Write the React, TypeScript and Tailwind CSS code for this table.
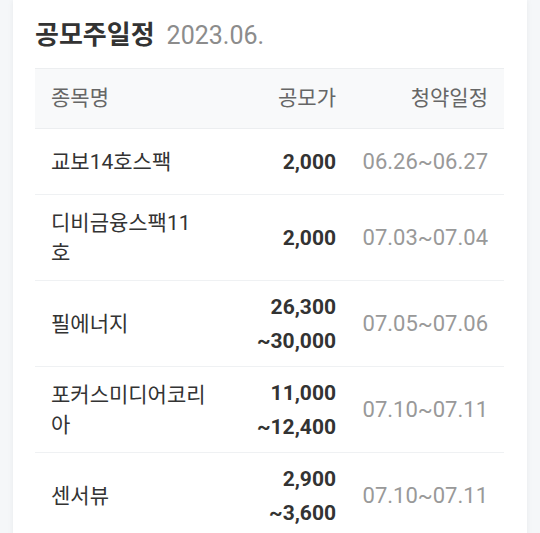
import React from "react";

type Row = { name: React.ReactNode; price: React.ReactNode; date: string; two: boolean };

const rows: Row[] = [
  { name: "교보14호스팩", price: "2,000", date: "06.26~06.27", two: false },
  { name: <>디비금융스팩11<br />호</>, price: "2,000", date: "07.03~07.04", two: true },
  { name: "필에너지", price: <>26,300<br />~30,000</>, date: "07.05~07.06", two: true },
  { name: <>포커스미디어코리<br />아</>, price: <>11,000<br />~12,400</>, date: "07.10~07.11", two: true },
  { name: "센서뷰", price: <>2,900<br />~3,600</>, date: "07.10~07.11", two: true },
];

export default function App() {
  return (
    <div
      className="min-h-[533px] w-[540px] bg-[#f5f7f9] overflow-hidden"
      style={{ fontFamily: 'Roboto, "Noto Sans CJK KR", sans-serif' }}
    >
      <div className="ml-[13px] w-[514px] min-h-[533px] bg-white shadow-[0_0_6px_rgba(0,0,0,0.06)] px-[22px] pt-[16px]">
        <div className="flex items-baseline h-[38px] leading-[38px]">
          <span className="text-[26px] font-bold text-[#333333]">공모주일정</span>
          <span className="ml-[12px] text-[25px] text-[#8c8c8c]">2023.06.</span>
        </div>
        <div className="mt-[14px] w-[469px]">
          <div className="grid grid-cols-[193px_124px_152px] h-[61px] items-center bg-[#f8f9fa] border-t border-b border-[#eceef0] text-[21px] text-[#666666]">
            <div className="pl-[16px]">종목명</div>
            <div className="pr-[16px] text-right">공모가</div>
            <div className="pr-[16px] text-right">청약일정</div>
          </div>
          {rows.map((r, i) => (
            <div
              key={i}
              className={`grid grid-cols-[193px_124px_152px] items-center border-b border-[#eff1f3] ${r.two ? "h-[86px]" : "h-[66px]"}`}
            >
              <div className="pl-[16px] text-[21px] leading-[30px] text-[#333333] whitespace-nowrap">{r.name}</div>
              <div className="pr-[16px] text-right text-[21px] leading-[34px] font-bold text-[#333333] whitespace-nowrap">{r.price}</div>
              <div className="pr-[16px] text-right text-[22px] leading-[34px] text-[#999999] whitespace-nowrap">{r.date}</div>
            </div>
          ))}
        </div>
      </div>
    </div>
  );
}
